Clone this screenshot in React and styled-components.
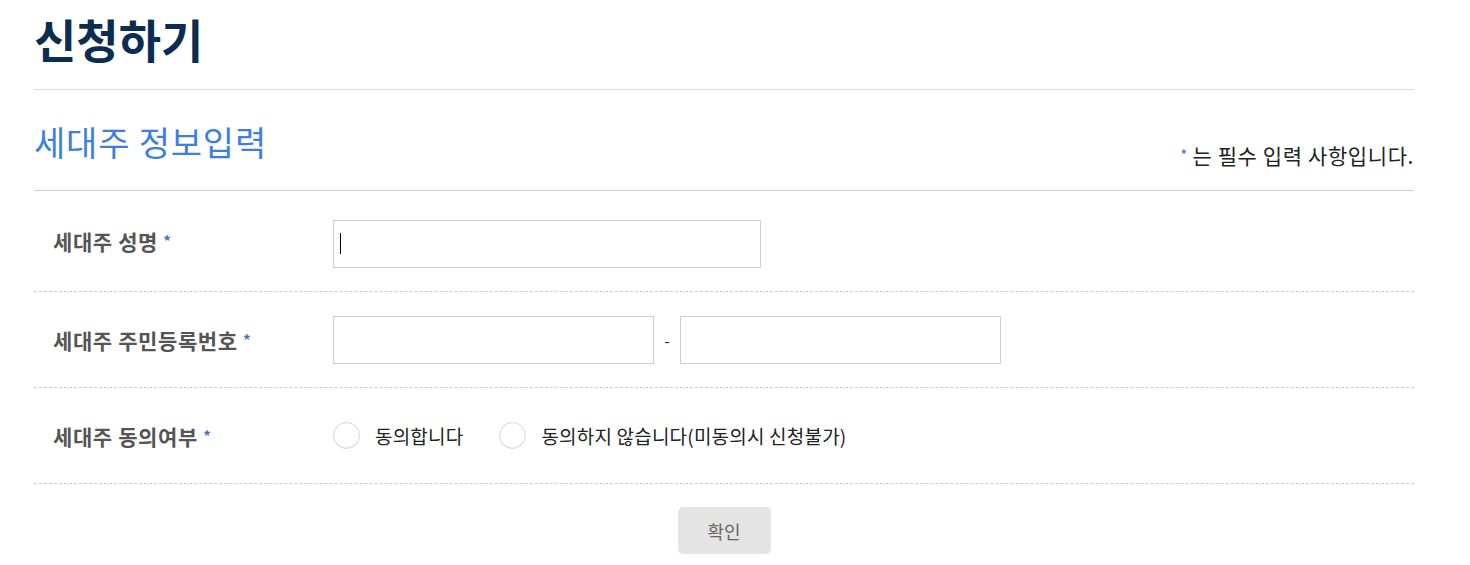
import styled, { createGlobalStyle } from 'styled-components';

const GlobalStyle = createGlobalStyle`
  body {
    margin: 0;
    background: #fff;
    font-family: 'Noto Sans CJK KR', 'Noto Sans', sans-serif;
  }
`;

export default function App() {
  return (
    <>
      <GlobalStyle />
      <Page>
        <PageTitle>신청하기</PageTitle>
        <SectionHead>
          <SectionTitle>세대주 정보입력</SectionTitle>
          <Note>
            <Star>*</Star> 는 필수 입력 사항입니다.
          </Note>
        </SectionHead>
        <Form>
          <Row tall>
            <Label>
              세대주 성명 <Star>*</Star>
            </Label>
            <Field shift={5}>
              <InputWrap>
                <TextInput width={428} autoFocus />
                <Caret />
              </InputWrap>
            </Field>
          </Row>
          <Row>
            <Label>
              세대주 주민등록번호 <Star>*</Star>
            </Label>
            <Field>
              <TextInput width={321} />
              <Dash>-</Dash>
              <TextInput width={321} />
            </Field>
          </Row>
          <Row>
            <Label>
              세대주 동의여부 <Star>*</Star>
            </Label>
            <Field>
              <RadioLabel>
                <Radio />
                동의합니다
              </RadioLabel>
              <RadioLabel>
                <Radio />
                동의하지 않습니다(미동의시 신청불가)
              </RadioLabel>
            </Field>
          </Row>
        </Form>
        <Actions>
          <ConfirmButton>확인</ConfirmButton>
        </Actions>
      </Page>
    </>
  );
}

const Page = styled.div`
  width: 1380px;
  margin-left: 34px;
`;
const PageTitle = styled.h1`
  margin: 0;
  height: 90px;
  box-sizing: border-box;
  padding-top: 6px;
  font-size: 46px;
  font-weight: 700;
  line-height: 64px;
  color: #0c2d52;
  border-bottom: 1px solid #dcdcdc;
`;
const SectionHead = styled.div`
  display: flex;
  justify-content: space-between;
  align-items: flex-end;
  height: 101px;
  box-sizing: border-box;
  padding-bottom: 22px;
  border-bottom: 1px solid #cfcfcf;
`;
const SectionTitle = styled.h2`
  margin: 0 0 4px 0;
  font-size: 34px;
  font-weight: 400;
  letter-spacing: 0.8px;
  line-height: 44px;
  color: #3c7fe0;
`;
const Note = styled.p`
  margin: 0;
  font-size: 21px;
  letter-spacing: 0.6px;
  line-height: 26px;
  color: #222;
`;
const Star = styled.span`
  color: #4d6fbf;
  font-size: 15px;
  letter-spacing: 0;
  vertical-align: 3px;
`;
const Form = styled.div`
  display: flex;
  flex-direction: column;
`;
const Row = styled.div`
  display: flex;
  align-items: center;
  height: ${(p) => (p.tall ? 100 : 95)}px;
  border-bottom: 1px dashed #cccccc;
`;
const Label = styled.div`
  width: 299px;
  padding-left: 19px;
  box-sizing: border-box;
  font-size: 21px;
  font-weight: 700;
  letter-spacing: 0.6px;
  color: #555;
`;
const Field = styled.div`
  display: flex;
  align-items: center;
  margin-top: ${(p) => p.shift || 0}px;
`;
const InputWrap = styled.div`
  position: relative;
  display: flex;
`;
const TextInput = styled.input`
  width: ${(p) => p.width}px;
  height: 48px;
  box-sizing: border-box;
  border: 1px solid #cfcfcf;
  padding: 0 6px;
  font-size: 17px;
  font-family: inherit;
  outline: none;
  caret-color: #000;
`;
const Caret = styled.span`
  position: absolute;
  left: 7px;
  top: 13px;
  width: 1px;
  height: 21px;
  background: #000;
  pointer-events: none;
`;
const Dash = styled.span`
  width: 26px;
  text-align: center;
  color: #333;
  font-size: 16px;
`;
const RadioLabel = styled.label`
  display: flex;
  align-items: center;
  margin-right: 36px;
  font-size: 19px;
  letter-spacing: 0.2px;
  color: #222;
  cursor: pointer;
`;
const Radio = styled.span`
  width: 27px;
  height: 27px;
  box-sizing: border-box;
  border: 1px solid #d4d4d4;
  border-radius: 50%;
  box-shadow: inset 0 -1px 1px rgba(0, 0, 0, 0.06);
  margin-right: 15px;
`;
const Actions = styled.div`
  display: flex;
  justify-content: center;
  padding-top: 23px;
`;
const ConfirmButton = styled.button`
  width: 93px;
  height: 47px;
  border: none;
  border-radius: 5px;
  background: #e4e4e4;
  color: #666;
  font-size: 18px;
  font-family: inherit;
  cursor: pointer;
`;
